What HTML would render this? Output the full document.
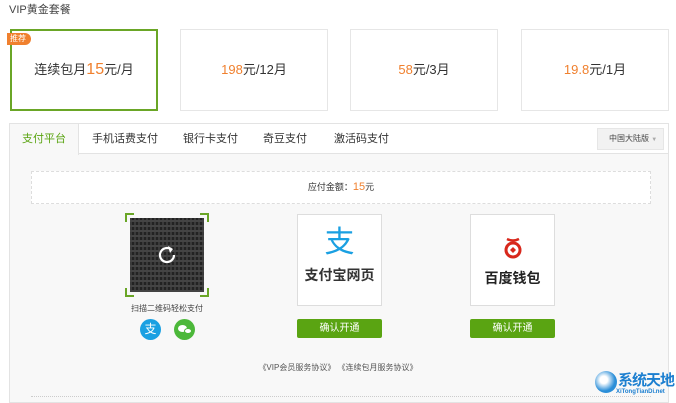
<!DOCTYPE html>
<html><head><meta charset="utf-8"><style>
*{margin:0;padding:0;box-sizing:border-box}
body{width:676px;height:400px;background:#fff;font-family:"Liberation Sans","Noto Sans CJK SC",sans-serif;position:relative;overflow:hidden;color:#333}
.a{position:absolute;white-space:nowrap}
.pk{position:absolute;top:29px;width:148px;height:82px;border:1px solid #e6e6e6;background:#fff;font-size:13px;text-align:center;line-height:80px;color:#333}
.o{color:#f0802e}
.btn{position:absolute;width:85px;height:19px;background:#5aa412;color:#fff;font-size:10px;text-align:center;line-height:19px;border-radius:2px}
.card{position:absolute;width:85px;height:92px;background:#fff;border:1px solid #ddd;text-align:center}
</style></head><body>
<div class="a" style="left:9px;top:1px;font-size:11px;color:#444">VIP黄金套餐</div>
<div class="pk" style="left:10px;border:2px solid #6aa626;line-height:78px">连续包月<span class="o" style="font-size:16px">15</span>元/月</div>
<div class="a" style="left:7px;top:33px;width:24px;height:12px;background:#f0802e;color:#fff;font-size:8px;line-height:12px;padding-left:3px;border-radius:0 6px 6px 0">推荐</div>
<div class="pk" style="left:180px"><span class="o">198</span>元/12月</div>
<div class="pk" style="left:350px"><span class="o">58</span>元/3月</div>
<div class="pk" style="left:521px"><span class="o">19.8</span>元/1月</div>

<div class="a" style="left:9px;top:123px;width:660px;height:280px;border:1px solid #e3e3e3;background:#f8f8f8"></div>
<div class="a" style="left:10px;top:124px;width:658px;height:30px;background:#fff;border-bottom:1px solid #e3e3e3"></div>
<div class="a" style="left:10px;top:124px;width:69px;height:31px;background:#f8f8f8;border-right:1px solid #e3e3e3;color:#5aa412;font-size:11px;line-height:30px;text-align:center">支付平台</div>
<div class="a" style="left:92px;top:124px;font-size:11px;line-height:30px">手机话费支付</div>
<div class="a" style="left:183px;top:124px;font-size:11px;line-height:30px">银行卡支付</div>
<div class="a" style="left:263px;top:124px;font-size:11px;line-height:30px">奇豆支付</div>
<div class="a" style="left:334px;top:124px;font-size:11px;line-height:30px">激活码支付</div>
<div class="a" style="left:597px;top:128px;width:67px;height:22px;background:#f2f2f2;border:1px solid #e6e6e6;font-size:8px;line-height:20px;padding-left:11px;color:#444">中国大陆版 <span style="color:#aaa;font-size:6px">▼</span></div>

<div class="a" style="left:31px;top:171px;width:620px;height:33px;border:1px dashed #ddd;background:#fff;text-align:center;font-size:9px;line-height:31px">应付金额：<span class="o" style="font-size:11px">15</span>元</div>

<div class="a" style="left:125px;top:213px;width:84px;height:84px;border:2px solid #6aa626"></div>
<div class="a" style="left:134px;top:211px;width:66px;height:88px;background:#f8f8f8"></div>
<div class="a" style="left:123px;top:222px;width:88px;height:66px;background:#f8f8f8"></div>
<div class="a" style="left:130px;top:218px;width:74px;height:74px;background:#222;background-image:repeating-linear-gradient(0deg,#444 0 2px,transparent 2px 5px),repeating-linear-gradient(90deg,#3a3a3a 0 2px,transparent 2px 4px)"></div>
<svg class="a" style="left:155px;top:243px" width="24" height="24" viewBox="0 0 24 24"><path d="M19 12a7 7 0 1 1-3-5.7" fill="none" stroke="#fff" stroke-width="2.2"/><path d="M13 3l5 3-3 4z" fill="#fff"/></svg>
<div class="a" style="left:110px;top:303px;width:114px;text-align:center;font-size:8px;color:#444">扫描二维码轻松支付</div>
<div class="a" style="left:140px;top:319px;width:21px;height:21px;border-radius:50%;background:#1aa0e2;color:#fff;font-size:12px;text-align:center;line-height:21px">支</div>
<div class="a" style="left:174px;top:319px;width:21px;height:21px;border-radius:50%;background:#4cb83a"></div>
<div class="a" style="left:178px;top:325px;width:9px;height:7px;border-radius:50%;background:#fff"></div>
<div class="a" style="left:184px;top:328px;width:8px;height:6px;border-radius:50%;background:#fff;border:1px solid #4cb83a"></div>

<div class="card" style="left:297px;top:214px"><div style="color:#1aa0e2;font-size:30px;margin-top:12px;line-height:32px">支</div><div style="font-size:14px;font-weight:bold;color:#333;margin-top:6px">支付宝网页</div></div>
<div class="btn" style="left:297px;top:319px">确认开通</div>
<div class="card" style="left:470px;top:214px"><svg style="margin-top:22px" width="20" height="22" viewBox="0 0 20 22"><path d="M4 2q6 3 12 0" fill="none" stroke="#d8281c" stroke-width="2.5"/><circle cx="10" cy="13" r="7" fill="none" stroke="#d8281c" stroke-width="3"/><path d="M10 10l3 3-3 3-3-3z" fill="#d8281c"/></svg><div style="font-size:14px;font-weight:bold;color:#222;margin-top:4px">百度钱包</div></div>
<div class="btn" style="left:470px;top:319px">确认开通</div>

<div class="a" style="left:0;top:362px;width:676px;text-align:center;font-size:8px;color:#555">《VIP会员服务协议》 《连续包月服务协议》</div>
<div class="a" style="left:31px;top:396px;width:620px;border-top:1px dotted #ccc"></div>

<div class="a" style="left:595px;top:371px;width:22px;height:22px;border-radius:50%;background:radial-gradient(circle at 40% 40%,#fff 20%,#2a8ed8 60%)"></div>
<div class="a" style="left:618px;top:369px;font-size:15px;font-weight:bold;color:#1c7fd0;letter-spacing:-1px">系统天地</div>
<div class="a" style="left:616px;top:389px;font-size:6px;font-weight:bold;color:#1c7fd0">XiTongTianDi.net</div>
</body></html>
